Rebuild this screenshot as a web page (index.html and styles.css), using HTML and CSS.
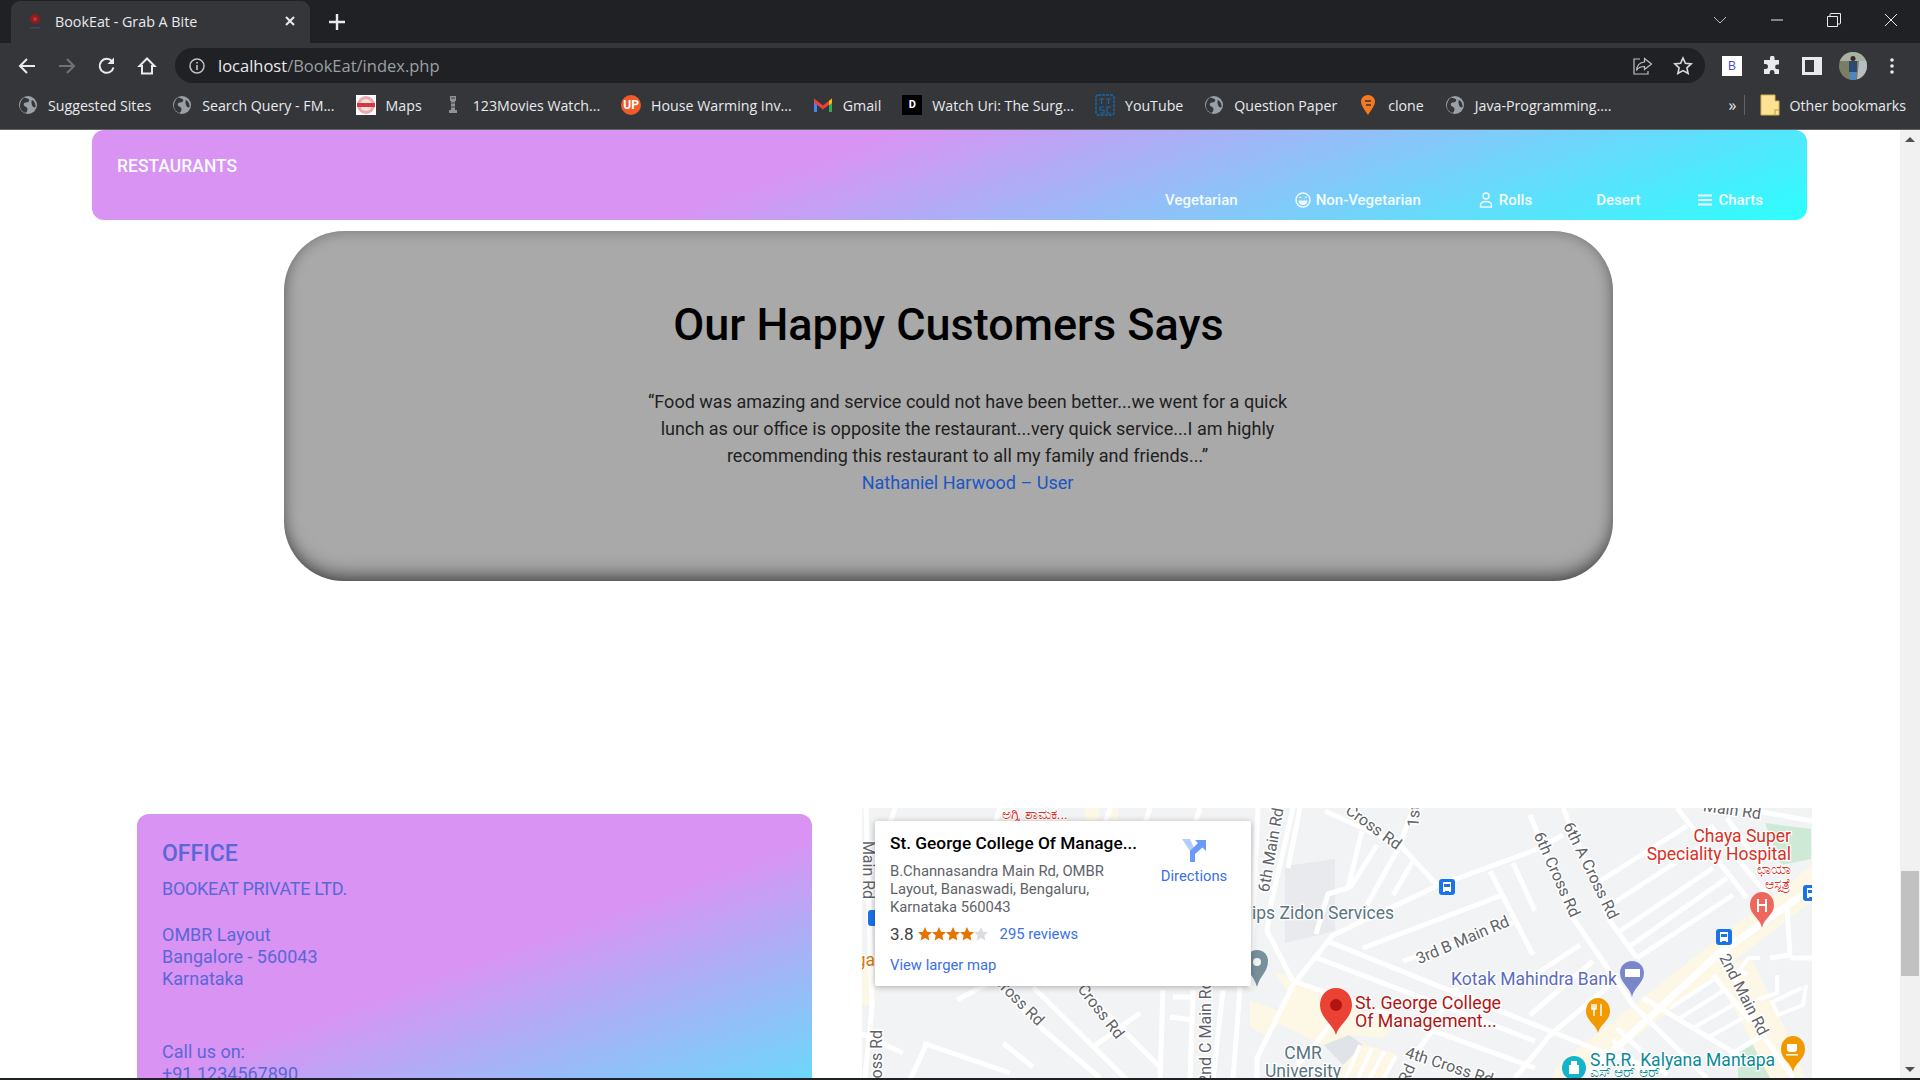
FILE: index.html
```html
<!DOCTYPE html>
<html lang="en">
  <head>
    <meta charset="UTF-8" />
    <title>BookEat - Grab A Bite</title>
    <link rel="stylesheet" href="styles.css">
  </head>
  <body>
    <svg class="defs" width="0" height="0">
      <symbol id="globe" viewBox="0 0 20 20">
        <circle cx="10" cy="10" r="9" fill="#9aa0a6" />
        <path d="M6 2.500c2 1 4 .5 5 2s-1 3-3 3-3 2-1.500 3.500 3 1 3 3-1 3-2 4c-3-1-5-3-5.500-6S3 5 6 2.500zM14 5c2 1 4 4 3.500 7-1 1-3 0-3.500-2s-1-3 0-5z" fill="#35363a" />
      </symbol>
    </svg>

    <!-- browser window top -->
    <div class="tabstrip">
      <div class="tab">
        <svg class="fav" width="16" height="18" viewBox="0 0 16 18"><circle cx="8" cy="7" r="5" fill="#8a1c22" /><circle cx="8" cy="7" r="2" fill="#c9302c" /><rect x="3" y="15" width="10" height="1.500" fill="#3b4a63" /></svg>
        <span class="tab-title">BookEat - Grab A Bite</span>
        <svg class="tab-x" width="12" height="12" viewBox="0 0 12 12"><path d="M2 2l8 8M10 2l-8 8" stroke="#e8eaed" stroke-width="2" /></svg>
      </div>
      <svg class="newtab" width="18" height="18" viewBox="0 0 18 18"><path d="M9 1v16M1 9h16" stroke="#e8eaed" stroke-width="2.400" /></svg>
      <div class="winbtns">
        <svg width="14" height="8" viewBox="0 0 14 8"><path d="M1 1l6 6 6-6" fill="none" stroke="#bdc1c6" /></svg>
        <svg width="14" height="14" viewBox="0 0 14 14"><path d="M1 7h12" stroke="#e8eaed" /></svg>
        <svg width="14" height="14" viewBox="0 0 14 14"><path d="M.5 3.500h10v10H.5zM3 3.500V1.500Q3 .5 4 .5h9.500V10q0 1-1 1h-2" fill="none" stroke="#e8eaed" /></svg>
        <svg width="14" height="14" viewBox="0 0 14 14"><path d="M1 1l12 12M13 1L1 13" stroke="#e8eaed" /></svg>
      </div>
    </div>

    <div class="toolbar">
      <svg class="nav-ic" width="20" height="20" viewBox="0 0 20 20"><path d="M18 10H3M10 3l-7 7 7 7" fill="none" stroke="#e8eaed" stroke-width="2" /></svg>
      <svg class="nav-ic" width="20" height="20" viewBox="0 0 20 20"><path d="M2 10h15M10 3l7 7-7 7" fill="none" stroke="#6f7276" stroke-width="2" /></svg>
      <svg class="nav-ic" width="20" height="20" viewBox="0 0 20 20"><path d="M16.500 11.500A7 7 0 1 1 15 5.200" fill="none" stroke="#e8eaed" stroke-width="2" /><path d="M17 1.500V8h-6.500z" fill="#e8eaed" /></svg>
      <svg class="nav-ic" width="20" height="20" viewBox="0 0 20 20"><path d="M10 2.500L2.500 10H5v7.500h10V10h2.500z" fill="none" stroke="#e8eaed" stroke-width="2" /></svg>
      <div class="omni">
        <svg width="16" height="16" viewBox="0 0 16 16"><circle cx="8" cy="8" r="7" fill="none" stroke="#bdc1c6" stroke-width="1.500" /><path d="M8 7v5M8 4v1.600" stroke="#bdc1c6" stroke-width="1.600" /></svg>
        <span class="url">localhost<span class="url-path">/BookEat/index.php</span></span>
        <svg class="share" width="20" height="20" viewBox="0 0 20 20"><path d="M11.500 2.500l7 5.500-7 5.500V10.500c-4 0-6.500 1.200-8 4 .3-4.500 3-8 8-8.500zM7 3H1v15h14v-3" fill="none" stroke="#bdc1c6" stroke-width="1.200" /></svg>
        <svg width="20" height="20" viewBox="0 0 20 20"><path d="M10 2l2.400 5.300 5.800.6-4.300 3.900 1.200 5.700L10 14.600l-5.100 2.900 1.200-5.700L1.800 7.900l5.800-.6z" fill="none" stroke="#dadce0" stroke-width="1.600" /></svg>
      </div>
      <div class="ext-b">B</div>
      <svg class="ext" width="20" height="20" viewBox="0 0 20 20"><path d="M8 1.500a2.300 2.300 0 0 1 4.500 0V4H17v4.500h-1.500a2.400 2.400 0 0 0 0 4.800H17V18H12.500v-1.500a2.400 2.400 0 0 0-4.800 0V18H2v-5h1.500a2.500 2.500 0 0 0 0-5H2V4h6z" fill="#e8eaed" /></svg>
      <svg class="ext" width="20" height="20" viewBox="0 0 20 20"><rect x="1.500" y="2.500" width="17" height="15" fill="none" stroke="#e8eaed" stroke-width="3" /><rect x="12" y="2.500" width="6" height="15" fill="#e8eaed" /></svg>
      <svg class="avatar" width="28" height="28" viewBox="0 0 28 28"><defs><clipPath id="av"><circle cx="14" cy="14" r="14" /></clipPath></defs><g clip-path="url(#av)"><rect width="28" height="28" fill="#7b7d63" /><rect y="0" width="28" height="9" fill="#a9b1a4" /><path d="M18 28l2-19h8v19z" fill="#b9bcc0" /><rect x="10" y="9" width="8" height="11" fill="#2c4a72" /><rect x="11" y="20" width="6" height="8" fill="#4f86c2" /><circle cx="14" cy="6.500" r="2.500" fill="#3a2a22" /></g></svg>
      <svg class="dots" width="6" height="18" viewBox="0 0 6 18"><circle cx="3" cy="3" r="1.800" fill="#e8eaed" /><circle cx="3" cy="9" r="1.800" fill="#e8eaed" /><circle cx="3" cy="15" r="1.800" fill="#e8eaed" /></svg>
    </div>

    <div class="bookmarks">
      <a class="bm"><svg width="20" height="20"><use href="#globe" /></svg>Suggested Sites</a>
      <a class="bm"><svg width="20" height="20"><use href="#globe" /></svg>Search Query - FM...</a>
      <a class="bm"><svg width="20" height="20" viewBox="0 0 20 20"><rect width="20" height="20" fill="#fff" /><circle cx="10" cy="10" r="9" fill="#e9a9ad" /><circle cx="10" cy="10" r="6" fill="#f6dcdd" /><rect x="1" y="8" width="18" height="4" fill="#cf3a44" /></svg>Maps</a>
      <a class="bm"><svg width="20" height="20" viewBox="0 0 20 20"><path d="M7 1h6v5h-1v9h2v3H6v-3h2V6H7z" fill="#8f9295" /><path d="M8 3h4M8 8h4M8 12h4" stroke="#3c3d40" /></svg>123Movies Watch...</a>
      <a class="bm"><span class="bm-up">UP</span>House Warming Inv...</a>
      <a class="bm"><svg width="20" height="20" viewBox="0 0 20 20"><path d="M1 5v12h3V8z" fill="#4285f4" /><path d="M19 5v12h-3V8z" fill="#34a853" /><path d="M1 3.500l9 7 9-7v4l-9 7-9-7z" fill="#ea4335" /><path d="M16 6l3-2.500V8l-3 2.300z" fill="#fbbc04" /></svg>Gmail</a>
      <a class="bm"><span class="bm-d">D</span>Watch Uri: The Surg...</a>
      <a class="bm"><svg width="20" height="22" viewBox="0 0 20 22"><rect x="1" y="1" width="18" height="20" rx="2" fill="none" stroke="#1769aa" stroke-width="1.500" stroke-dasharray="3 1" /><path d="M4 5h5M6.500 5v5M11 5h5M13.500 5v5M9 13H5v3h4v3H5M16 13h-4v6h4" fill="none" stroke="#1769aa" stroke-width="1.200" /></svg>YouTube</a>
      <a class="bm"><svg width="20" height="20"><use href="#globe" /></svg>Question Paper</a>
      <a class="bm"><svg width="20" height="22" viewBox="0 0 20 22"><path d="M10 1c4 0 7 3 7 6.500 0 4-4 9-7 13.500-3-4.500-7-9.500-7-13.500C3 4 6 1 10 1z" fill="#f4791f" /><path d="M7 7h6M13 11H8" stroke="#35363a" stroke-width="1.600" /></svg>clone</a>
      <a class="bm"><svg width="20" height="20"><use href="#globe" /></svg>Java-Programming....</a>
      <span class="bm-more">»</span>
      <span class="bm-sep"></span>
      <a class="bm"><svg width="20" height="22" viewBox="0 0 20 22"><path d="M1 1h14v6h4v14H1z" fill="#fde293" stroke="#d6b24e" /><path d="M15 21v-5h4" fill="none" stroke="#d6b24e" stroke-width="1.500" /></svg>Other bookmarks</a>
    </div>

    <div class="viewport">
      <div class="page">
        <div class="banner">
          <div class="brand">RESTAURANTS</div>
          <ul class="menu">
            <li>Vegetarian</li>
            <li><svg width="16" height="16" viewBox="0 0 16 16"><circle cx="8" cy="8" r="7" fill="none" stroke="#eefaff" stroke-width="1.500" /><path d="M3.500 8.500h9c0 3-2 4.500-4.500 4.500s-4.500-1.500-4.500-4.500z" fill="#eefaff" /><path d="M4 6q1-2 2.500 0M9.500 6q1.500-2 2.500 0" fill="none" stroke="#eefaff" /></svg>Non-Vegetarian</li>
            <li><svg width="16" height="16" viewBox="0 0 16 16"><circle cx="8" cy="4" r="3" fill="none" stroke="#eefaff" stroke-width="1.500" /><path d="M2.500 15v-1.500C2.500 10.500 5 9.500 8 9.500s5.500 1 5.500 4V15z" fill="none" stroke="#eefaff" stroke-width="1.500" /></svg>Rolls</li>
            <li class="menu-gap">Desert</li>
            <li><svg width="16" height="16" viewBox="0 0 16 16"><path d="M1 3.500h14M1 8h14M1 12.500h14" stroke="#eefaff" stroke-width="2" /></svg>Charts</li>
          </ul>
        </div>

        <div class="says">
          <h1>Our Happy Customers Says</h1>
          <div class="says-text">
            <p>“Food was amazing and service could not have been better...we went for a quick lunch as our office is opposite the restaurant...very quick service...I am highly recommending this restaurant to all my family and friends...”</p>
            <a class="says-by">Nathaniel Harwood – User</a>
          </div>
        </div>

        <div class="contact">
          <div class="office">
            <h2>OFFICE</h2>
            <p class="company">BOOKEAT PRIVATE LTD.</p>
            <p class="addr">OMBR Layout<br />Bangalore - 560043<br />Karnataka</p>
            <p class="call">Call us on:<br />+91 1234567890</p>
          </div>

          <div class="map">
            <svg class="map-svg" width="950" height="270" viewBox="862 808 950 270">
              <rect x="862" y="808" width="950" height="270" fill="#f1f3f4" />
              <!-- areas -->
              <path d="M1285 866l50-7v72l-50 12z" fill="#e8eaed" />
              <path d="M1765 823l46 6v30l-30 6z" fill="#ceead6" />
              <path d="M1738 1052l26-16 24 42h-50z" fill="#ceead6" />
              <path d="M1557 1065l255-200v36l-230 177h-30z" fill="#fdf7e6" />
              <path d="M1750 955l40 85 15 38h-35l-30-58-25-45z" fill="#fdf7e6" />
              <path d="M1273 971l20 7 100 50-10 10-33-3-27 10-50-24 17-26z" fill="#fdf7e6" />
              <path d="M1250 1000l40 15-25 20-15-8zM1350 1040l47 14-10 24h-50zM862 955h13v50h-13zM1085 808h14v12h-14zM1110 808h8v12h-8z" fill="#fdf7e6" />
              <path d="M1324 1045l25-10 14 10-20 20z" fill="#e0e3e7" />
              <!-- roads -->
              <g class="roads">
                <path d="M1257 1078v-20l36-73 40-50 104-49 98-36 28-15" />
                <path d="M1325 811l75 34 37 40" />
                <path d="M1400 845l-33 60M1413 808l-13 37" />
                <path d="M1362 831l-14 57-20 6-12 40M1377 845l-27 43" />
                <path d="M1413 861l-20 34" />
                <path d="M1363 948l137-52M1403 961l110-38" />
                <path d="M1490 871l43 84M1513 863l22 48" />
                <path d="M1327 941l208 84 60 24 60 20" />
                <path d="M1317 958l218 83" />
                <path d="M1293 981l97 34 145 53" />
                <path d="M1293 808l-23 100-3 23 26 50" />
                <path d="M1330 1025l-20 26-25 27M1437 1025l-20 26M1457 988l-27 40" />
                <path d="M1360 1045l-14 33M1372 1048l-14 30M1384 1052l-14 26M1396 1056l-12 22" class="road-thin" />
                <path d="M1563 808l47 113 27 37" />
                <path d="M1530 815l43 103 60 87 74 73" />
                <path d="M1587 1075l130-120 95-67" class="road-big" />
                <path d="M1677 808l70 90" />
                <path d="M1710 825l60 73" />
                <path d="M1600 881l87-55M1610 905l93-60M1620 931l93-63M1627 948l100-70M1637 958l96-63" />
                <path d="M1720 948l43 87 30 43" />
                <path d="M1713 975l37 46" />
                <path d="M1670 1008l43-28M1680 1018l43-27M1693 1028l40-23M1707 1038l36-20" class="road-thin" />
                <path d="M1643 998l100 60M1730 1055l33-20" />
                <path d="M1787 908l3 47-20 3M1790 958h22" />
                <path d="M1747 975l-7-5 8-12h12M1777 975v18l-20 7M1806 985l-3 20-25 10-6-13 30-14" class="road-thin" />
                <path d="M1580 945l-50 33M1593 961l-63 54M1610 985l-60 50-35 43" />
                <path d="M1617 1028l50 47M1613 1040l35 38" />
                <path d="M1757 811l55 10M1727 818l30 43" />
                <path d="M957 1000l43-23M997 983l43 44 60 51M1033 987l94 93M1080 987l80 80" />
                <path d="M1003 1043l30 24M923 1043l87 30M927 1043l-17 37M1093 1047l47-34M860 1033l43 20" />
                <path d="M1163 990l-3 90M1223 990l-10 90M1240 987l-7 93M1193 990l-3 90M1173 997h20M1170 1017l23 3" />
                <path d="M866 808l6 200-7 70" />
                <path d="M1258 808l-8 180" />
                <path d="M895 808l-5 15M1000 808l-5 15M1110 808l-5 15M1150 808l-5 15M1200 808l-5 15M1300 808l-12 60" />
              </g>
              <!-- labels -->
              <g class="rd-lbl">
                <text transform="translate(1272 850) rotate(-80)">6th Main Rd</text>
                <text transform="translate(1373 828) rotate(36)">Cross Rd</text>
                <text transform="translate(1415 816) rotate(-85)">1st</text>
                <text transform="translate(1556 875) rotate(66)">6th Cross Rd</text>
                <text transform="translate(1590 871) rotate(64)">6th A Cross Rd</text>
                <text transform="translate(1732 811) rotate(8)">Main Rd</text>
                <text transform="translate(1463 941) rotate(-23)">3rd B Main Rd</text>
                <text transform="translate(1743 995) rotate(63)">2nd Main Rd</text>
                <text transform="translate(1449 1067) rotate(18)">4th Cross Rd</text>
                <text transform="translate(1018 1001) rotate(45)">Cross Rd</text>
                <text transform="translate(1100 1012) rotate(52)">Cross Rd</text>
                <text transform="translate(1207 1032) rotate(-90)">2nd C Main Rd</text>
                <text transform="translate(878 1062) rotate(-90)">Cross Rd</text>
                <text transform="translate(867 870) rotate(90)">Main Rd</text>
                <text transform="translate(1408 1074) rotate(-66)">Rd</text>
              </g>
              <text class="lbl lbl-grey" x="1394" y="919" text-anchor="end">Philips Zidon Services</text>
              <text class="lbl lbl-grey" x="1303" y="1059" text-anchor="middle">CMR</text>
              <text class="lbl lbl-grey" x="1303" y="1077" text-anchor="middle">University</text>
              <text class="lbl lbl-bank" x="1451" y="985">Kotak Mahindra Bank</text>
              <text class="lbl lbl-red" x="1355" y="1009">St. George College</text>
              <text class="lbl lbl-red" x="1355" y="1027">Of Management...</text>
              <text class="lbl lbl-hosp" x="1791" y="842" text-anchor="end">Chaya Super</text>
              <text class="lbl lbl-hosp" x="1791" y="860" text-anchor="end">Speciality Hospital</text>
              <text class="lbl lbl-kn lbl-hosp" x="1791" y="874" text-anchor="end">ಛಾಯಾ</text>
              <text class="lbl lbl-kn lbl-hosp" x="1791" y="889" text-anchor="end">ಆಸ್ಪತ್ರೆ</text>
              <text class="lbl lbl-kn lbl-hosp" x="1035" y="819" text-anchor="middle">ಅಗ್ನಿ ಶಾಮಕ...</text>
              <text class="lbl lbl-kn lbl-teal" x="1590" y="1077">ಎಸ್ ಆರ್ ಆರ್</text>
              <text class="lbl lbl-teal" x="1590" y="1066">S.R.R. Kalyana Mantapa</text>
              <text class="lbl lbl-shop" x="875" y="966" text-anchor="end">ga</text>
              <!-- bus stops -->
              <g class="bus">
                <rect x="1439" y="879" width="16" height="16" rx="3" />
                <rect x="1716" y="929" width="16" height="16" rx="3" />
                <rect x="1803" y="885" width="16" height="16" rx="3" />
                <rect x="868" y="910" width="12" height="16" rx="3" />
                <path d="M1443 882h8v10h-2v-1h-4v1h-2zM1720 932h8v10h-2v-1h-4v1h-2zM1807 888h8v10h-2v-1h-4v1h-2z" fill="#fff" />
                <path d="M1444 884h6v3h-6zM1721 934h6v3h-6zM1808 890h6v3h-6z" />
              </g>
              <!-- pins -->
              <path d="M1336 988c-9 0-16 7-16 17 0 13 13 19 16 30 3-11 16-17 16-30 0-10-7-17-16-17z" fill="#ea4335" />
              <circle cx="1336" cy="1005" r="6" fill="#b31412" />
              <path d="M1632 961c-7 0-12 5-12 12 0 10 10 14 12 24 2-10 12-14 12-24 0-7-5-12-12-12z" fill="#7986cb" />
              <rect x="1625" y="969" width="15" height="8" fill="#fff" />
              <path d="M1762 892c-7 0-12 6-12 13 0 10 10 13 12 23 2-10 12-13 12-23 0-7-5-13-12-13z" fill="#ee675c" />
              <path d="M1758 899v13M1766 899v13M1758 905h8" stroke="#fff" stroke-width="2" />
              <path d="M1598 998c-7 0-12 6-12 13 0 10 10 13 12 22 2-9 12-12 12-22 0-7-5-13-12-13z" fill="#f29900" />
              <path d="M1594 1004v12M1592 1004v5h4v-5M1601 1004v12" stroke="#fff" stroke-width="1.500" fill="none" />
              <path d="M1793 1036c-7 0-12 6-12 13 0 11 10 13 12 23 2-10 12-12 12-23 0-7-5-13-12-13z" fill="#f29900" />
              <path d="M1787 1044h10v5q0 3-3 3h-4q-3 0-3-3zM1786 1054h12v1.500h-12z" fill="#fff" />
              <circle cx="1574" cy="1068" r="12" fill="#12b5cb" />
              <path d="M1571 1061h6v4h2v9h-10v-9h2z" fill="#fff" />
              <path d="M1257 950c-7 0-11 5-11 11 0 11 8 14 11 26 3-12 11-15 11-26 0-6-4-11-11-11z" fill="#78909c" />
              <circle cx="1257" cy="962" r="4" fill="#f1f3f4" />
            </svg>
            <div class="place">
              <div class="place-info">
                <div class="place-name">St. George College Of Manage...</div>
                <div class="place-addr">B.Channasandra Main Rd, OMBR Layout, Banaswadi, Bengaluru, Karnataka 560043</div>
                <div class="place-rate">
                  <span class="rate-num">3.8</span>
                  <svg width="70" height="14" viewBox="0 0 70 14"><g fill="#e37400"><path d="M7 0l2.100 4.700 4.900.5-3.700 3.300 1.100 5L7 11l-4.400 2.500 1.100-5L0 5.200l4.900-.5z" /><path d="M21 0l2.100 4.700 4.900.5-3.700 3.300 1.100 5L21 11l-4.400 2.500 1.100-5L14 5.200l4.900-.5z" /><path d="M35 0l2.100 4.700 4.900.5-3.700 3.300 1.100 5L35 11l-4.400 2.500 1.100-5L28 5.200l4.900-.5z" /><path d="M49 0l2.100 4.700 4.900.5-3.700 3.300 1.100 5L49 11l-4.400 2.500 1.100-5L42 5.200l4.900-.5z" /></g><path d="M63 0l2.100 4.700 4.900.5-3.700 3.300 1.100 5L63 11l-4.400 2.500 1.100-5L56 5.200l4.900-.5z" fill="#dadce0" /></svg>
                  <a class="maplink">295 reviews</a>
                </div>
                <a class="maplink larger">View larger map</a>
              </div>
              <div class="place-dir">
                <svg width="24" height="24" viewBox="0 0 24 24"><path d="M0 1h8l5 11v12H8V13z" fill="#b5cdfc" /><path d="M8 24V13L16 5l-3-3h11v11l-3.500-3.500L13 16v8z" fill="#6a9af5" /></svg>
                <a class="maplink">Directions</a>
              </div>
            </div>
          </div>
        </div>
      </div>
      <div class="scrollbar">
        <span class="sb-up"></span>
        <span class="sb-thumb"></span>
        <span class="sb-down"></span>
      </div>
    </div>
    <div class="taskbar-edge"></div>
  </body>
</html>
```

FILE: styles.css
```css
html,
body {
  height: 100%;
}
body {
  margin: 0;
  display: flex;
  flex-direction: column;
  height: 1080px;
  overflow: hidden;
  background: #fff;
  font-family: Roboto, "Liberation Sans", sans-serif;
}
.defs {
  display: none;
}

/* browser */
.tabstrip {
  height: 43px;
  flex: none;
  display: flex;
  align-items: flex-end;
  background: #202124;
}
.tab {
  width: 299px;
  height: 42px;
  margin-left: 11px;
  padding: 0 14px 2px 16px;
  box-sizing: border-box;
  display: flex;
  align-items: center;
  background: #35363a;
  border-radius: 9px 9px 0 0;
  color: #e8eaed;
}
.fav {
  margin-right: 12px;
}
.tab-title {
  flex: 1;
  font: 14.300px "Open Sans", sans-serif;
}
.newtab {
  align-self: center;
  margin-left: 18px;
}
.winbtns {
  margin-left: auto;
  align-self: center;
  display: flex;
  align-items: center;
  gap: 43px;
  padding-right: 22px;
  margin-top: -4px;
}
.toolbar {
  height: 40px;
  flex: none;
  box-sizing: border-box;
  padding: 5px 0 0 17px;
  display: flex;
  align-items: center;
  background: #35363a;
}
.nav-ic {
  margin-right: 20px;
}
.omni {
  width: 1530px;
  height: 35px;
  margin-left: -2px;
  padding: 0 12px 0 14px;
  box-sizing: border-box;
  display: flex;
  align-items: center;
  background: #202124;
  border-radius: 18px;
}
.url {
  flex: 1;
  margin-left: 13px;
  color: #e8eaed;
  font: 16.500px "Open Sans", sans-serif;
}
.url-path {
  color: #9aa0a6;
}
.share {
  margin-right: 20px;
}
.ext-b {
  width: 20px;
  height: 20px;
  margin-left: 17px;
  background: #fff;
  color: #4a55c5;
  font: 500 12px/20px "Liberation Sans", sans-serif;
  text-align: center;
}
.ext {
  margin-left: 20px;
}
.avatar {
  margin-left: 17px;
}
.dots {
  margin-left: 22px;
}
.bookmarks {
  height: 47px;
  flex: none;
  box-sizing: border-box;
  padding: 0 14px 2px 18px;
  display: flex;
  align-items: center;
  gap: 21px;
  background: #35363a;
  border-bottom: 1px solid #5f6368;
  color: #e8eaed;
  font: 14.200px "Open Sans", sans-serif;
  white-space: nowrap;
}
.bm {
  display: flex;
  align-items: center;
  gap: 10px;
}
.bm-up {
  width: 20px;
  height: 20px;
  border-radius: 50%;
  background: #f15a29;
  color: #fff;
  font: 700 12px/20px Roboto, sans-serif;
  text-align: center;
}
.bm-d {
  width: 20px;
  height: 20px;
  background: #000;
  color: #fff;
  font: 700 11px/20px Roboto, sans-serif;
  text-align: center;
}
.bm-more {
  margin-left: auto;
  font-size: 16px;
  margin-right: -14px;
}
.bm-sep {
  width: 1px;
  height: 20px;
  margin-right: -6px;
  background: #5f6368;
}

/* page */
.viewport {
  flex: 1;
  min-height: 0;
  display: flex;
}
.page {
  flex: 1;
  min-width: 0;
  overflow: hidden;
}
.scrollbar {
  width: 20px;
  flex: none;
  display: flex;
  flex-direction: column;
  align-items: center;
  background: #f1f1f1;
}
.sb-up,
.sb-down {
  width: 0;
  height: 0;
  border-left: 5px solid transparent;
  border-right: 5px solid transparent;
}
.sb-up {
  margin-top: 7px;
  border-bottom: 5px solid #505050;
}
.sb-thumb {
  width: 18px;
  height: 105px;
  margin-top: 729px;
  background: #c1c1c1;
}
.sb-down {
  margin-top: auto;
  margin-bottom: 6px;
  border-top: 5px solid #505050;
}
.taskbar-edge {
  height: 2px;
  flex: none;
  background: #202124;
}

/* restaurants bar */
.banner {
  height: 90px;
  margin: 0 93px 0 92px;
  padding: 26px 44px 11px 25px;
  box-sizing: border-box;
  display: flex;
  justify-content: space-between;
  background: linear-gradient(160deg, #d993f3 41%, #2bffff 100%);
  border-radius: 12px;
  color: #f4fbff;
}
.brand {
  font-size: 17.500px;
  font-weight: 500;
}
.menu {
  align-self: flex-end;
  display: flex;
  gap: 57px;
  margin: 0;
  padding: 0;
  list-style: none;
  font-size: 15px;
  font-weight: 500;
}
.menu li {
  display: flex;
  align-items: center;
  gap: 5px;
}
.menu-gap {
  margin-left: 7px;
}

/* testimonial */
.says {
  height: 350px;
  margin: 11px 287px 0 284px;
  padding-top: 67px;
  box-sizing: border-box;
  background: #a9a9a9;
  border-radius: 60px;
  box-shadow: inset 0 -10px 20px -6px rgba(0, 0, 0, 0.6), inset 0 2px 14px rgba(0, 0, 0, 0.2);
  color: #000;
}
.says h1 {
  margin: 0 0 36px;
  font-size: 45px;
  font-weight: 500;
  line-height: 54px;
  text-align: center;
}
.says-text {
  padding-left: 38px;
  font-size: 18.050px;
  line-height: 27px;
  text-align: center;
}
.says-text p {
  width: 660px;
  margin: 0 auto;
  color: #1f1f1f;
}
.says-by {
  color: #1a56c4;
}

/* office + map */
.contact {
  display: flex;
  align-items: flex-start;
  gap: 50px;
  margin-top: 227px;
  padding-left: 137px;
}
.office {
  width: 675px;
  height: 410px;
  flex: none;
  margin-top: 6px;
  padding: 25px 25px;
  box-sizing: border-box;
  background: linear-gradient(160deg, #d993f3 41%, #2bffff 100%);
  border-radius: 12px;
  color: #5a67d8;
  font-size: 18px;
  line-height: 22px;
}
.office h2 {
  margin: 0 0 10px;
  font-size: 23px;
  font-weight: 500;
  line-height: 29px;
}
.office p {
  margin: 0;
}
.office .company {
  letter-spacing: -0.300px;
}
.office .addr {
  margin-top: 24px;
}
.office .call {
  margin-top: 50.500px;
}
.map {
  position: relative;
  width: 950px;
  height: 270px;
  flex: none;
  overflow: hidden;
}
.map-svg {
  display: block;
}
.roads path {
  fill: none;
  stroke: #fff;
  stroke-width: 5;
  stroke-linejoin: round;
}
.roads .road-big {
  stroke-width: 7;
}
.roads .road-thin {
  stroke-width: 4;
}
.rd-lbl text {
  fill: #5f6368;
  font: 16px Roboto, sans-serif;
  text-anchor: middle;
  dominant-baseline: middle;
  stroke: #fff;
  stroke-width: 3px;
  paint-order: stroke;
}
.lbl {
  font: 17.500px Roboto, sans-serif;
  stroke: #fff;
  stroke-width: 2.500px;
  paint-order: stroke;
}
.lbl-kn {
  font-size: 14px;
}
.lbl-grey {
  fill: #5b7481;
}
.lbl-bank {
  fill: #5c6bc0;
}
.lbl-red {
  fill: #b31412;
  font-size: 17.800px;
}
.lbl-hosp {
  fill: #d93025;
}
.lbl-teal {
  fill: #0b8a96;
}
.lbl-shop {
  fill: #d97706;
}
.bus rect,
.bus path:last-child {
  fill: #1a73e8;
}

/* place card over the map */
.place {
  position: absolute;
  top: 13px;
  left: 13px;
  width: 376px;
  height: 165px;
  padding: 11px 15px;
  box-sizing: border-box;
  display: flex;
  justify-content: space-between;
  background: #fff;
  border-radius: 2px;
  box-shadow: 0 1px 6px rgba(0, 0, 0, 0.3);
  color: #5f6368;
  font-size: 14.800px;
}
.place-info {
  width: 250px;
}
.place-name {
  color: #000;
  font-size: 17.300px;
  font-weight: 500;
  line-height: 22px;
  white-space: nowrap;
}
.place-addr {
  width: 240px;
  margin-top: 7.500px;
  line-height: 18.400px;
}
.place-rate {
  display: flex;
  align-items: center;
  margin-top: 7px;
  gap: 4px;
}
.rate-num {
  color: #3c4043;
  font-size: 17px;
}
.maplink {
  color: #3a70e8;
}
.place-rate .maplink {
  margin-left: 8px;
}
.larger {
  display: block;
  margin-top: 12px;
}
.place-dir {
  width: 70px;
  margin: 6px 7px 0 0;
  display: flex;
  flex-direction: column;
  align-items: center;
  gap: 5px;
}
```
